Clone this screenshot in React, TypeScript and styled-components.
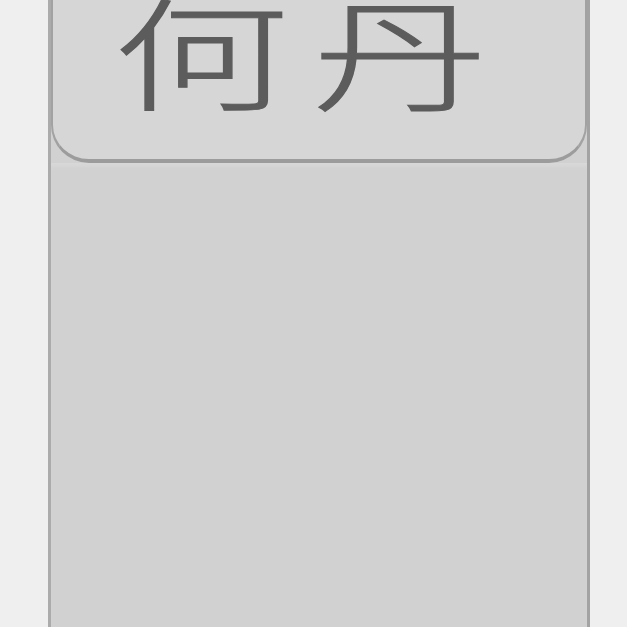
import styled, { createGlobalStyle } from 'styled-components';

const GlobalStyle = createGlobalStyle`
  html, body {
    margin: 0;
    padding: 0;
    background: #efefef;
    overflow: hidden;
  }
`;

const Page = styled.div`
  height: 627px;
  display: flex;
  padding: 0 37px 0 48px;
  background: #efefef;
  font-family: "Noto Sans CJK SC", "Noto Sans", sans-serif;
`;

const Panel = styled.div`
  flex: 1;
  display: flex;
  flex-direction: column;
  background: #d1d1d1;
  border-left: 3px solid #ababab;
  border-right: 3px solid #a3a3a3;
  filter: blur(0.7px);
`;

const TabButton = styled.button`
  height: 163px;
  flex-shrink: 0;
  display: flex;
  align-items: flex-end;
  justify-content: center;
  padding: 0 30px 50px 0;
  overflow: hidden;
  background: #d6d6d6;
  border: 2px solid #a2a2a2;
  border-top: none;
  border-bottom: 4px solid #9c9c9c;
  border-radius: 0 0 38px 38px;
  font-family: inherit;
  cursor: pointer;
`;

const Label = styled.span`
  display: block;
  font-size: 122px;
  line-height: 1;
  font-weight: 300;
  -webkit-text-stroke: 1px #5c5c5c;
  letter-spacing: 16px;
  margin-right: -16px;
  color: #5c5c5c;
  white-space: nowrap;
  transform: scaleX(1.44);
  transform-origin: center bottom;
`;

const Body = styled.div`
  flex: 1;
  box-shadow: inset 0 6px 6px -4px #dcdcdc;
`;

export default function App() {
  return (
    <>
      <GlobalStyle />
      <Page>
        <Panel>
          <TabButton>
            <Label>何丹</Label>
          </TabButton>
          <Body />
        </Panel>
      </Page>
    </>
  );
}
